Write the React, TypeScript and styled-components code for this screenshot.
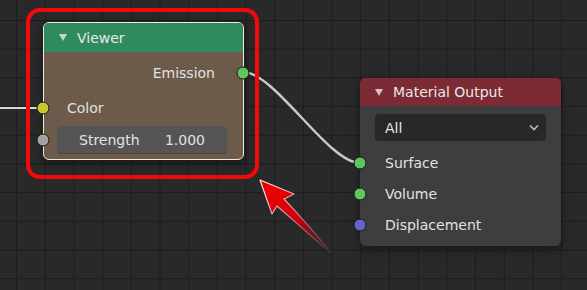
import React from "react";
import styled, { createGlobalStyle } from "styled-components";

const Global = createGlobalStyle`
  html, body { margin: 0; padding: 0; background: #292929; }
  body { font-family: "DejaVu Sans", "Noto Sans", sans-serif; overflow: hidden; }
`;

const Canvas = styled.div`
  position: relative;
  width: 587px;
  height: 290px;
  overflow: hidden;
  background-color: #292929;
  background-image: linear-gradient(to right, #1c1c1c 1px, transparent 1px),
    linear-gradient(to bottom, #1c1c1c 1px, transparent 1px);
  background-size: 28.7px 28.7px;
  background-position: 16px 20px;
`;

const Overlay = styled.svg`
  position: absolute;
  left: 0;
  top: 0;
  pointer-events: none;
`;

const Node = styled.div<{ $x: number; $y: number; $body: string; $selected?: boolean }>`
  position: absolute;
  left: ${(p) => p.$x}px;
  top: ${(p) => p.$y}px;
  width: 201px;
  box-sizing: border-box;
  display: flex;
  flex-direction: column;
  background: ${(p) => p.$body};
  border-radius: 6px;
  border: ${(p) => (p.$selected ? "1px solid #ecebdc" : "none")};
  box-shadow: 0 3px 8px rgba(0, 0, 0, 0.45);
  color: #e2e2e2;
  font-size: 14px;
`;

const Header = styled.div<{ $bg: string; $h: number }>`
  height: ${(p) => p.$h}px;
  display: flex;
  align-items: center;
  gap: 10px;
  padding-left: 15px;
  background: ${(p) => p.$bg};
  border-radius: 5px 5px 0 0;
  color: #e8e8e8;
`;

const Body = styled.div<{ $pt: number; $pb: number }>`
  display: flex;
  flex-direction: column;
  padding: ${(p) => p.$pt}px 0 ${(p) => p.$pb}px;
`;

const Row = styled.div<{ $h: number; $align?: "left" | "right"; $pad: number; $mt?: number }>`
  position: relative;
  height: ${(p) => p.$h}px;
  margin-top: ${(p) => p.$mt ?? 0}px;
  display: flex;
  align-items: center;
  justify-content: ${(p) => (p.$align === "right" ? "flex-end" : "flex-start")};
  padding-left: ${(p) => (p.$align === "right" ? 0 : p.$pad)}px;
  padding-right: ${(p) => (p.$align === "right" ? p.$pad : 0)}px;
`;

const Socket = styled.span<{ $color: string; $side: "left" | "right"; $off: number }>`
  position: absolute;
  top: 50%;
  ${(p) => (p.$side === "left" ? `left: ${p.$off}px;` : `right: ${p.$off}px;`)}
  width: 13px;
  height: 13px;
  border-radius: 50%;
  background: ${(p) => p.$color};
  border: 1px solid #1a1a1a;
  box-sizing: border-box;
  transform: translate(${(p) => (p.$side === "left" ? "-50%" : "50%")}, -50%);
  z-index: 2;
`;

const Field = styled.div`
  flex: 1;
  height: 27px;
  margin: 0 16px 0 13px;
  display: flex;
  align-items: center;
  justify-content: space-between;
  padding: 0 22px;
  background: #555555;
  border-radius: 4px;
  box-shadow: 0 1px 0 rgba(0, 0, 0, 0.25);
`;

const Dropdown = styled.div`
  height: 27px;
  margin: 0 15px;
  display: flex;
  align-items: center;
  justify-content: space-between;
  padding: 0 7px 0 10px;
  background: #282828;
  border-radius: 4px;
`;

const Annotation = styled.div`
  position: absolute;
  left: 26px;
  top: 8px;
  width: 233px;
  height: 171px;
  box-sizing: border-box;
  border: 4px solid #f20a0a;
  border-radius: 14px;
  pointer-events: none;
`;

const Tri = () => (
  <svg width="8" height="7" viewBox="0 0 8 7">
    <polygon points="0,0 8,0 4,7" fill="rgba(235,235,235,0.8)" />
  </svg>
);

export default function App() {
  return (
    <Canvas>
      <Global />
      <Overlay width="587" height="290">
        <path d="M0 108 L43 108" stroke="#d8d8d8" strokeWidth="2.2" fill="none" />
        <path d="M243 72 C 275 72, 328 163, 360 163" stroke="#cacaca" strokeWidth="2.4" fill="none" />
      </Overlay>

      <Node $x={43} $y={22} $body="#6c5b4b" $selected>
        <Header $bg="#2f8a5e" $h={29}>
          <Tri />
          <span>Viewer</span>
        </Header>
        <Body $pt={8} $pb={6}>
          <Row $h={26} $align="right" $pad={28}>
            Emission
            <Socket $color="#5fc65f" $side="right" $off={0} />
          </Row>
          <Row $h={26} $pad={23} $mt={9}>
            Color
            <Socket $color="#c9c62e" $side="left" $off={-1} />
          </Row>
          <Row $h={27} $pad={0} $mt={5}>
            <Field>
              <span>Strength</span>
              <span>1.000</span>
            </Field>
            <Socket $color="#a2a2a2" $side="left" $off={-1} />
          </Row>
        </Body>
      </Node>

      <Node $x={360} $y={78} $body="#3e3e3e">
        <Header $bg="#7c2a33" $h={28}>
          <Tri />
          <span>Material Output</span>
        </Header>
        <Body $pt={8} $pb={6}>
          <Dropdown>
            <span>All</span>
            <svg width="10" height="7" viewBox="0 0 10 7">
              <polyline points="1,1.5 5,5.5 9,1.5" stroke="#bdbdbd" strokeWidth="1.6" fill="none" />
            </svg>
          </Dropdown>
          <Row $h={31} $pad={25} $mt={6}>
            Surface
            <Socket $color="#5fc65f" $side="left" $off={0} />
          </Row>
          <Row $h={31} $pad={25}>
            Volume
            <Socket $color="#5fc65f" $side="left" $off={0} />
          </Row>
          <Row $h={31} $pad={25}>
            Displacement
            <Socket $color="#6363c8" $side="left" $off={0} />
          </Row>
        </Body>
      </Node>

      <Annotation />
      <Overlay width="587" height="290">
        <defs>
          <linearGradient id="arrowFill" x1="268" y1="188" x2="333" y2="255" gradientUnits="userSpaceOnUse">
            <stop offset="0" stopColor="#ee0000" />
            <stop offset="0.45" stopColor="#d00010" />
            <stop offset="1" stopColor="#700000" stopOpacity="0" />
          </linearGradient>
          <linearGradient id="arrowStroke" x1="268" y1="188" x2="333" y2="255" gradientUnits="userSpaceOnUse">
            <stop offset="0" stopColor="#ffe8e8" stopOpacity="0.95" />
            <stop offset="0.5" stopColor="#ffbcbc" stopOpacity="0.5" />
            <stop offset="1" stopColor="#ffffff" stopOpacity="0" />
          </linearGradient>
        </defs>
        <path
          d="M260 180 L294 194 L284 199 Q 306 222 333 255 Q 302 228 277 206 L272 214 Z"
          fill="url(#arrowFill)"
          stroke="url(#arrowStroke)"
          strokeWidth="1.2"
          strokeLinejoin="round"
        />
      </Overlay>
    </Canvas>
  );
}
